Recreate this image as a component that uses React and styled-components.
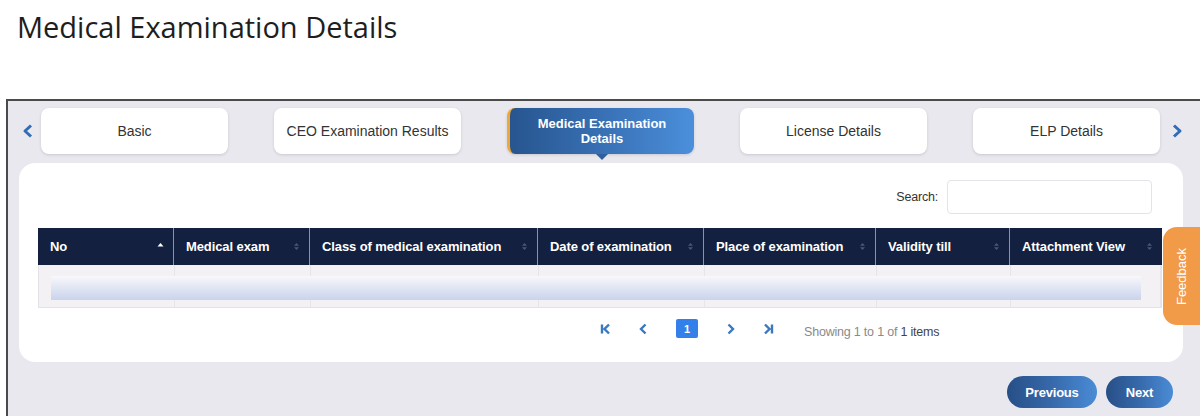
import React from 'react';
import styled, { createGlobalStyle } from 'styled-components';

const GlobalStyle = createGlobalStyle`
  body {
    margin: 0;
    background: #ffffff;
    font-family: "Liberation Sans", Arial, sans-serif;
  }
`

const Page = styled.div`
  position: relative;
  width: 1200px;
  height: 416px;
  overflow: hidden;
`

const Title = styled.h1`
  margin: 0;
  height: 99px;
  box-sizing: border-box;
  padding: 9px 0 0 17px;
  font-family: "Open Sans", sans-serif;
  font-weight: 400;
  font-size: 29px;
  line-height: 36px;
  color: #1e1e1e;
`

const Frame = styled.div`
  margin-left: 6px;
  height: 317px;
  box-sizing: border-box;
  border-top: 2px solid #4a4a4a;
  border-left: 2px solid #4a4a4a;
  background: #e9e8ef;
`

const TabRow = styled.div`
  display: flex;
  align-items: center;
  padding: 7px 0 0 14px;
`

const Arrow = styled.button`
  display: flex;
  align-items: center;
  justify-content: center;
  width: 12px;
  height: 46px;
  padding: 0;
  border: none;
  background: none;
  margin: ${p => (p.$right ? '0 0 0 11px' : '0 7px 0 0')};
`

const Tabs = styled.div`
  display: flex;
  gap: 46px;
`

const Tab = styled.div`
  position: relative;
  width: 187px;
  height: 46px;
  box-sizing: border-box;
  display: flex;
  flex-direction: column;
  align-items: center;
  justify-content: center;
  text-align: center;
  white-space: nowrap;
  border-radius: 8px;
  font-size: ${p => (p.$active ? '13px' : '14px')};
  line-height: ${p => (p.$active ? '15px' : '16px')};
  color: ${p => (p.$active ? '#ffffff' : '#333333')};
  font-weight: ${p => (p.$active ? 700 : 400)};
  background: ${p => (p.$active ? 'linear-gradient(90deg, #27558f 0%, #3a73b8 55%, #4b8fdb 100%)' : '#ffffff')};
  border-left: ${p => (p.$active ? '3px solid #f0a733' : 'none')};
  box-shadow: 0 1px 3px rgba(0, 0, 0, 0.14);
  padding: 0 6px;

  ${p => p.$active && `
    &::after {
      content: '';
      position: absolute;
      left: 50%;
      bottom: -6px;
      transform: translateX(-50%);
      border-left: 6px solid transparent;
      border-right: 6px solid transparent;
      border-top: 6px solid #2f5f9d;
    }
  `}
`

const Card = styled.div`
  margin: 9px 17px 0 11px;
  height: 199px;
  box-sizing: border-box;
  background: #ffffff;
  border-radius: 16px;
  padding: 17px 21px 0 19px;
`

const SearchRow = styled.div`
  display: flex;
  justify-content: flex-end;
  align-items: center;
  gap: 9px;
  padding-right: 10px;
  font-size: 12.5px;
  letter-spacing: -0.2px;
  color: #333333;
`

const SearchInput = styled.input`
  width: 205px;
  height: 34px;
  box-sizing: border-box;
  border: 1px solid #e4e3ea;
  border-radius: 4px;
  outline: none;
`

const Table = styled.div`
  margin-top: 14px;
  border: 1px solid #e4e2e8;
  border-top: none;
`

const cols = '136px 136px 228px 166px 172px 134px 1fr'

const HeadRow = styled.div`
  display: grid;
  grid-template-columns: ${cols};
  height: 37px;
  background: #14203f;
  margin: 0 -1px;
`

const HeadCell = styled.div`
  display: flex;
  align-items: center;
  justify-content: space-between;
  padding: 0 9px 0 12px;
  border-right: 1px solid #8a92a8;
  color: #ffffff;
  font-size: 13px;
  font-weight: 700;
  letter-spacing: -0.1px;
  &:last-child {
    border-right: none;
  }
`

const BodyRow = styled.div`
  position: relative;
  display: grid;
  grid-template-columns: ${cols};
  height: 42px;
  background: #f3f1f4;
`

const BodyCell = styled.div`
  border-right: 1px solid #e7e4ea;
  &:last-child {
    border-right: none;
  }
`

const LoadingBar = styled.div`
  position: absolute;
  left: 12px;
  right: 20px;
  top: 11px;
  height: 24px;
  background: linear-gradient(180deg, #f8f7fc 0%, #e3e7f4 45%, #c9d3eb 100%);
`

const Pager = styled.div`
  display: flex;
  align-items: center;
  gap: 26px;
  padding: 11px 0 0 562px;
  height: 19px;
`

const PagerIcon = styled.span`
  display: flex;
  width: 12px;
  justify-content: center;
`

const PageNum = styled.span`
  width: 22px;
  height: 19px;
  border-radius: 2px;
  background: #3480ea;
  color: #ffffff;
  font-size: 11px;
  font-weight: 700;
  display: flex;
  align-items: center;
  justify-content: center;
`

const Showing = styled.span`
  margin: 6px 0 0 4px;
  font-size: 12.5px;
  letter-spacing: -0.2px;
  color: #8a8a8a;
  b {
    font-weight: 400;
    color: #444444;
  }
`

const Footer = styled.div`
  display: flex;
  justify-content: flex-end;
  gap: 9px;
  padding: 14px 27px 0 0;
`

const PillButton = styled.button`
  width: ${p => p.$w}px;
  height: 32px;
  border: none;
  border-radius: 16px;
  background: linear-gradient(90deg, #274f87 0%, #3769ab 50%, #4a8cd6 100%);
  color: #ffffff;
  font-family: "Liberation Sans", Arial, sans-serif;
  font-size: 13px;
  letter-spacing: -0.2px;
  font-weight: 700;
`

const Feedback = styled.div`
  position: absolute;
  right: 0;
  top: 227px;
  width: 37px;
  height: 98px;
  border-radius: 14px 0 0 14px;
  background: #f19a48;
  display: flex;
  align-items: center;
  justify-content: center;
  span {
    transform: rotate(-90deg);
    color: #ffffff;
    font-size: 13px;
    white-space: nowrap;
  }
`

const Chevron = ({ dir }) => (
  <svg width="12" height="14" viewBox="0 0 12 14">
    <path
      d={dir === 'left' ? 'M9 1.5 L3 7 L9 12.5' : 'M3 1.5 L9 7 L3 12.5'}
      fill="none"
      stroke="#2f6db5"
      strokeWidth="3"
      strokeLinejoin="round"
    />
  </svg>
)

const PageGlyph = ({ kind }) => {
  const paths = {
    first: 'M2 1.5 V10.5 M9 1.5 L4.5 6 L9 10.5',
    prev: 'M7.5 1.5 L3 6 L7.5 10.5',
    next: 'M4.5 1.5 L9 6 L4.5 10.5',
    last: 'M10 1.5 V10.5 M3 1.5 L7.5 6 L3 10.5',
  }
  return (
    <svg width="12" height="12" viewBox="0 0 12 12">
      <path d={paths[kind]} fill="none" stroke="#3a78bf" strokeWidth="2.4" />
    </svg>
  )
}

const SortIcon = ({ active }) => (
  <svg width="7" height="9" viewBox="0 0 7 9">
    {active ? (
      <path d="M0.5 4.5 L3.5 1 L6.5 4.5 Z" fill="#ffffff" />
    ) : (
      <>
        <path d="M1 3.8 L3.5 1 L6 3.8 Z" fill="#4b5674" />
        <path d="M1 5.2 L3.5 8 L6 5.2 Z" fill="#4b5674" />
      </>
    )}
  </svg>
)

const tabs = [
  { lines: ['Basic'] },
  { lines: ['CEO Examination Results'] },
  { lines: ['Medical Examination', 'Details'], active: true },
  { lines: ['License Details'] },
  { lines: ['ELP Details'] },
]

const columns = [
  'No',
  'Medical exam',
  'Class of medical examination',
  'Date of examination',
  'Place of examination',
  'Validity till',
  'Attachment View',
]

export default function App() {
  return (
    <Page>
      <GlobalStyle />
      <Title>Medical Examination Details</Title>
      <Frame>
        <TabRow>
          <Arrow>
            <Chevron dir="left" />
          </Arrow>
          <Tabs>
            {tabs.map(t => (
              <Tab key={t.lines[0]} $active={t.active}>
                {t.lines.map(l => (
                  <span key={l}>{l}</span>
                ))}
              </Tab>
            ))}
          </Tabs>
          <Arrow $right>
            <Chevron dir="right" />
          </Arrow>
        </TabRow>

        <Card>
          <SearchRow>
            <span>Search:</span>
            <SearchInput />
          </SearchRow>

          <Table>
            <HeadRow>
              {columns.map((c, i) => (
                <HeadCell key={c}>
                  {c}
                  <SortIcon active={i === 0} />
                </HeadCell>
              ))}
            </HeadRow>
            <BodyRow>
              {columns.map(c => (
                <BodyCell key={c} />
              ))}
              <LoadingBar />
            </BodyRow>
          </Table>

          <Pager>
            <PagerIcon><PageGlyph kind="first" /></PagerIcon>
            <PagerIcon><PageGlyph kind="prev" /></PagerIcon>
            <PageNum>1</PageNum>
            <PagerIcon><PageGlyph kind="next" /></PagerIcon>
            <PagerIcon><PageGlyph kind="last" /></PagerIcon>
            <Showing>
              Showing 1 to 1 of <b>1 items</b>
            </Showing>
          </Pager>
        </Card>

        <Footer>
          <PillButton $w={90}>Previous</PillButton>
          <PillButton $w={67}>Next</PillButton>
        </Footer>
      </Frame>
      <Feedback>
        <span>Feedback</span>
      </Feedback>
    </Page>
  )
}
